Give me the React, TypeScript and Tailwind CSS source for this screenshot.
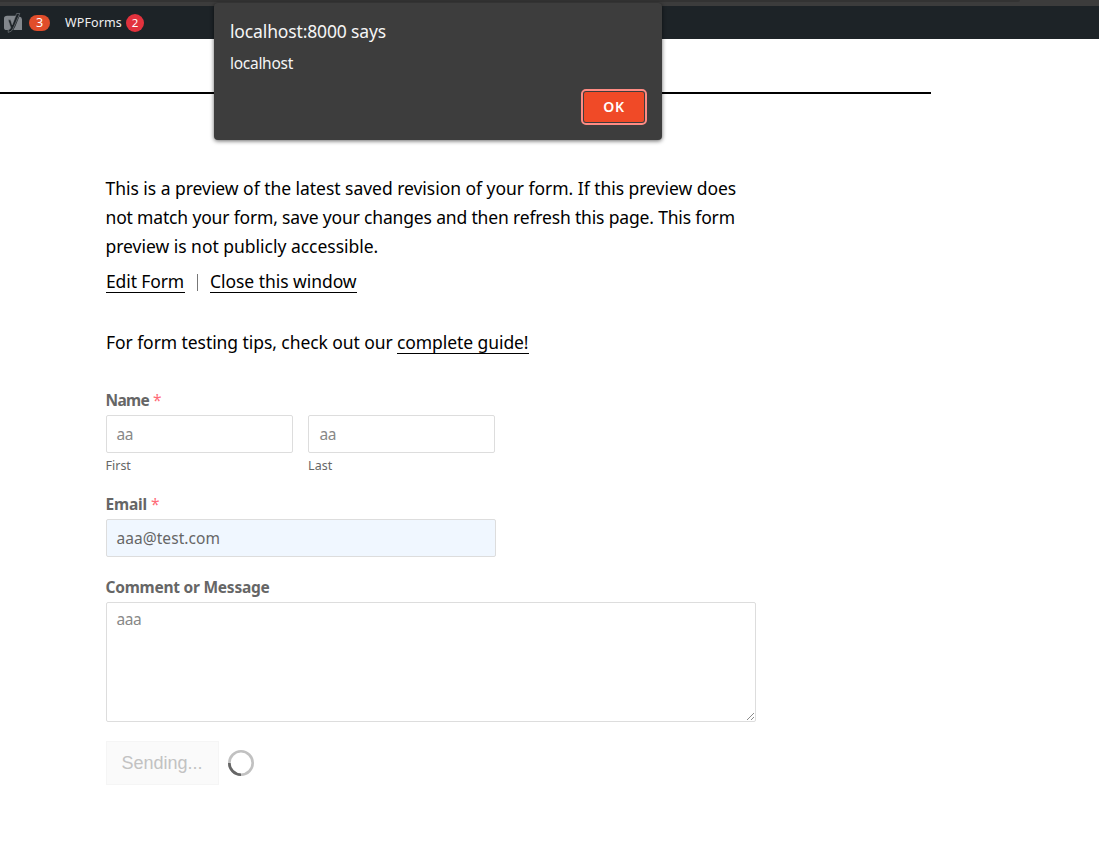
import type { ReactNode } from 'react';

function YoastIcon() {
  return (
    <svg width="18" height="20" viewBox="0 0 18 20" className="mt-px block shrink-0">
      <path d="M3.2 2.8H12.4L9 13.2L7.6 17H2.6Q0 17 0 14.4V5.6Q0 2.8 3.2 2.8Z" fill="#82878c" />
      <path d="M15.4 3.6Q18 4 18 6.6V17H9.4L11.4 13.2Z" fill="#82878c" />
      <path d="M12.6 .5H15.8L9.2 15.4Q7.8 19 4.2 19.4V16.9Q6.1 16.4 6.7 14.8L4.1 6.8H6.6L8.2 11.8Z" fill="#1d2327" stroke="#82878c" strokeWidth=".6" />
    </svg>
  );
}

function AdminBar() {
  return (
    <header>
      <div className="h-[6px] bg-[#3c3c3c]">
        <div className="h-[2px] w-[1020px] rounded-br bg-[#333333]" />
      </div>
      <div className="flex h-[33px] items-center bg-[#1d2327] pl-1 text-[12.5px] text-[#f0f0f1]">
        <YoastIcon />
        <span className="ml-[7px] flex h-4 w-[21px] items-center justify-center rounded-full bg-[#e14d2b] pt-px text-[12.5px] text-white">3</span>
        <span className="ml-[15px] w-[57px] pt-[2px] tracking-[0.13px]">WPForms</span>
        <span className="ml-[4px] flex size-[18px] items-center justify-center rounded-full bg-[#e2323d] text-[11.5px] leading-none text-white">2</span>
      </div>
    </header>
  );
}

function AlertDialog() {
  return (
    <div
      role="alertdialog"
      className="absolute left-[214px] top-[3px] flex h-[137px] w-[448px] flex-col rounded bg-[#3d3d3d] px-4 text-[#f5f5f5] shadow-[0_1px_4px_rgba(0,0,0,0.6)]"
    >
      <div className="mt-4 h-6 text-[17.5px] leading-6 tracking-[-0.14px]">localhost:8000 says</div>
      <div className="mt-[9px] h-[22px] text-[15.5px] leading-[22px] tracking-[-0.28px]">localhost</div>
      <button className="-mr-px mt-[15px] flex h-[36px] w-[66px] items-center justify-center self-end rounded-[5px] border-2 border-[#ff8b83] bg-[#3d3d3d] p-px">
        <span className="flex h-full w-full items-center justify-center rounded-[2px] bg-[#f04a27] pb-[2px] text-[14px] font-semibold tracking-[0.6px] text-white">
          OK
        </span>
      </button>
    </div>
  );
}

function TextLink({ children }: { children: ReactNode }) {
  return <a className="block h-[22px] border-b border-black leading-[20px]">{children}</a>;
}

function Label({ children, required, className = '' }: { children: ReactNode; required?: boolean; className?: string }) {
  return (
    <div className={`-ml-[0.5px] flex h-[20px] text-[15.5px] leading-[20px] ${className}`}>
      <span className="font-bold">{children}</span>
      {required && <span className="ml-1 tracking-normal text-[#ff6b78]">*</span>}
    </div>
  );
}

const fieldBox = 'rounded-[2px] border border-[#dddddd] px-[9.5px] text-[15.5px]';

function ContactForm() {
  return (
    <form className="mt-[36px] text-[#666666]">
      <Label required className="tracking-[-0.69px]">Name</Label>
      <div className="mt-[5px] flex gap-[15px]">
        <div className="w-[187px]">
          <div className={`${fieldBox} flex h-[38px] items-center pt-[2px] tracking-[-0.4px] text-[#888888]`}>aa</div>
          <div className="-ml-[0.5px] mt-[3px] h-5 text-[12.5px] leading-5">First</div>
        </div>
        <div className="w-[187px]">
          <div className={`${fieldBox} flex h-[38px] items-center pl-[10.5px] pt-[2px] tracking-[-0.4px] text-[#888888]`}>aa</div>
          <div className="mt-[3px] h-5 text-[12.5px] leading-5 tracking-[0.1px]">Last</div>
        </div>
      </div>
      <Label required className="mt-[18px] tracking-[-0.17px]">Email</Label>
      <div className={`${fieldBox} mt-[5px] flex h-[38px] w-[390px] items-center bg-[#f0f7ff] pt-[2px] tracking-[0.05px]`}>aaa@test.com</div>
      <Label className="mt-5 tracking-[-0.24px]">Comment or Message</Label>
      <div className={`${fieldBox} relative mt-[5px] h-[120px] w-[650px] pt-[6px] leading-5 tracking-[-0.4px] text-[#888888]`}>
        aaa
        <svg width="9" height="9" viewBox="0 0 9 9" className="absolute bottom-0 right-0">
          <path d="M1 8L8 1M5 8L8 5" stroke="#8a8a8a" strokeWidth="1" fill="none" />
        </svg>
      </div>
      <div className="mt-[19px] flex items-center gap-[9px]">
        <div className="flex h-[44px] w-[113px] items-center justify-center border border-[#f5f5f5] bg-[#fafafa] pr-px font-['Liberation_Sans',sans-serif] text-[18px] text-[#c2c2c2]">
          Sending...
        </div>
        <svg width="26" height="26" viewBox="0 0 26 26" className="block">
          <circle cx="13" cy="13" r="11.7" fill="none" stroke="#c1c1c1" strokeWidth="2.6" />
          <path d="M1.3 13A11.7 11.7 0 0 0 13 24.7" fill="none" stroke="#666666" strokeWidth="2.6" />
        </svg>
      </div>
    </form>
  );
}

export default function App() {
  return (
    <div className="relative h-[856px] w-[1099px] overflow-hidden bg-white font-['Noto_Sans',sans-serif]">
      <AdminBar />
      <div className="mt-[53px] h-[2px] w-[931px] bg-black" />
      <main className="ml-[106px] mt-[80px] w-[660px] text-[17.5px] text-black">
        <p className="-ml-[0.5px] whitespace-nowrap leading-[29px]">
          <span className="block tracking-[-0.034px]">This is a preview of the latest saved revision of your form. If this preview does</span>
          <span className="block tracking-[-0.165px]">not match your form, save your changes and then refresh this page. This form</span>
          <span className="block tracking-[-0.02px]">preview is not publicly accessible.</span>
        </p>
        <div className="mt-[10px] flex h-[22px] items-center">
          <span className="w-[79px] whitespace-nowrap tracking-[-0.12px]"><TextLink>Edit Form</TextLink></span>
          <span className="ml-[12px] h-[17px] w-px bg-[#777777]" />
          <span className="ml-[12px] tracking-[-0.05px]"><TextLink>Close this window</TextLink></span>
        </div>
        <p className="mt-[39px] flex h-[22px] items-start">
          <span className="w-[291px] whitespace-nowrap leading-[20px] tracking-[-0.07px]">For form testing tips, check out our</span>
          <span className="tracking-[-0.078px]"><TextLink>complete guide!</TextLink></span>
        </p>
        <ContactForm />
      </main>
      <AlertDialog />
    </div>
  );
}
